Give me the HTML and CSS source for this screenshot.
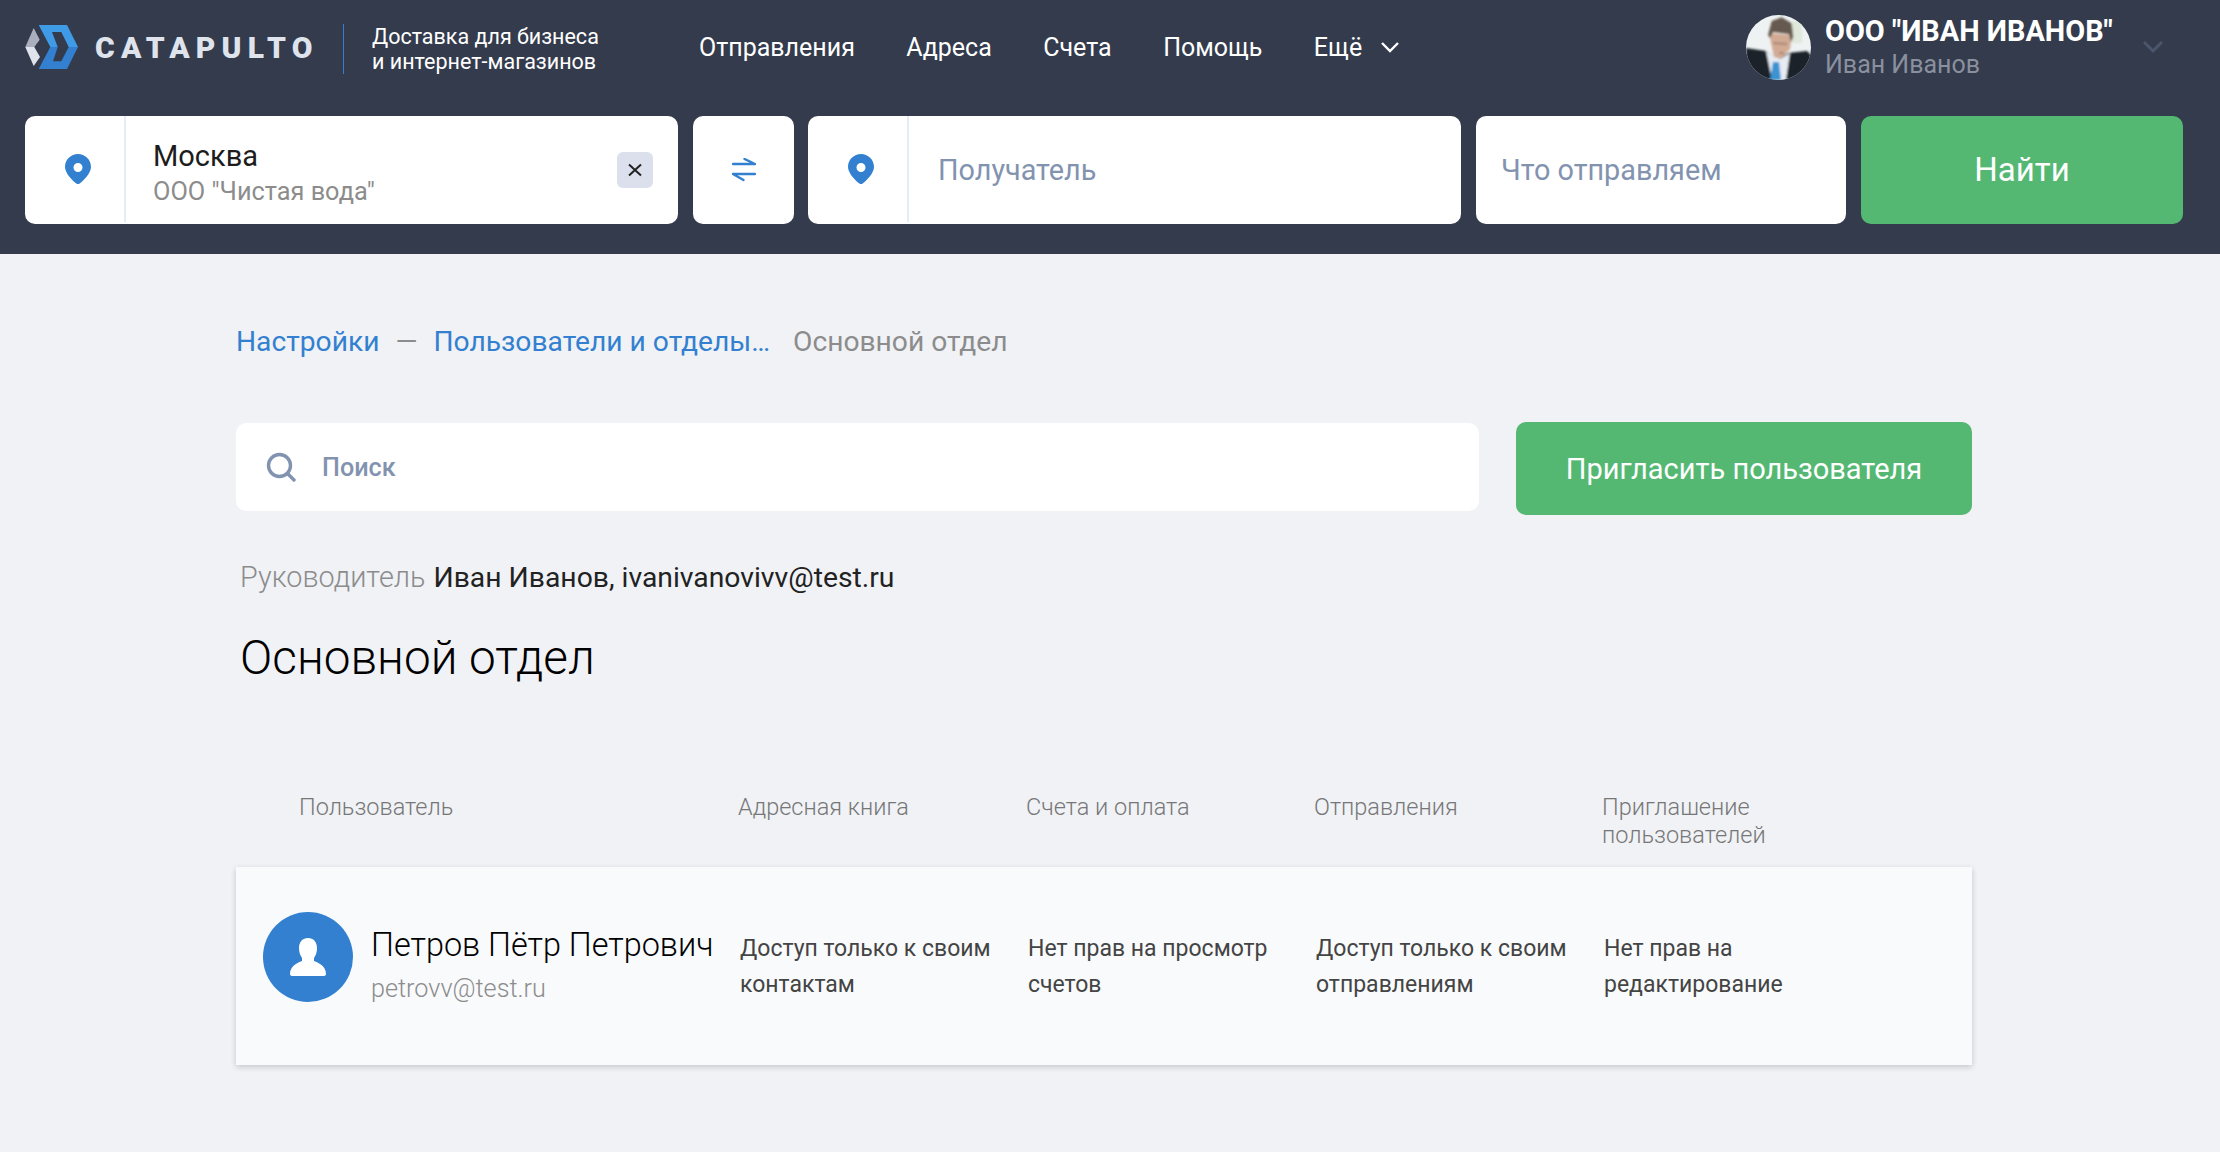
FILE: index.html
```html
<!DOCTYPE html>
<html lang="ru">
<head>
    <meta charset="UTF-8">
    <meta name="viewport" content="width=device-width, initial-scale=1.0">
    <title>Основной отдел</title>
    <link rel="stylesheet" href="styles.css">
</head>
<body>
    <header class="topo">
        <div class="barra">
            <div class="marca">
                <svg class="logo" width="54" height="44" viewBox="0 0 54 44">
                    <path d="M0.300 22 8.700 3 14.700 14.700 9.300 22z" fill="#a9afbc"/>
                    <path d="M0.300 22H9.300L15 32 8.700 41z" fill="#dfe3ec"/>
                    <path d="M13.700 0H42L53 22H43.700L36.300 7H27L32.700 22H25.300z" fill="#3f9be6"/>
                    <path d="M25.300 22H32.700L28 36.300H36.300L43.700 22H53L42 44H13.700z" fill="#3380d0"/>
                </svg>
                <span class="nome-logo">CATAPULTO</span>
                <div class="slogan">Доставка для бизнеса<br>и интернет-магазинов</div>
            </div>
            <nav class="menu">
                <a>Отправления</a>
                <a>Адреса</a>
                <a>Счета</a>
                <a>Помощь</a>
                <a class="mais">Ещё
                    <svg width="20" height="12" viewBox="0 0 20 12"><path d="M2 2l8 8 8-8" fill="none" stroke="#fff" stroke-width="2.400"/></svg>
                </a>
            </nav>
            <div class="conta">
                <svg class="foto" width="65" height="65" viewBox="0 0 65 65">
                    <defs>
                        <clipPath id="roda"><circle cx="32.500" cy="32.500" r="32.500"/></clipPath>
                        <filter id="suave"><feGaussianBlur stdDeviation="0.900"/></filter>
                    </defs>
                    <g clip-path="url(#roda)">
                        <rect width="65" height="65" fill="#eef2f3"/>
                        <g filter="url(#suave)">
                            <rect x="46" y="6" width="10" height="22" fill="#dfe8da"/>
                            <path d="M0 33 20 36 33 44 42 38 61 36 65 40V65H0z" fill="#1b2029"/>
                            <path d="M20 36 26 65H40L44 38 34 44z" fill="#e6ecf2"/>
                            <path d="M27 47H33L35 65H24z" fill="#3b93d2"/>
                            <path d="M23 18 46 20 44 34 35 44 28 42z" fill="#d2ab95"/>
                            <path d="M27 28 41 29M33 38 38 38" stroke="#8a6450" stroke-opacity="0.500" stroke-width="2" fill="none"/>
                            <path d="M22 20 25.700 6 35.700 2.300 45.700 8.300 47.300 22 45 27 43 19 27 17 24 23z" fill="#665a50"/>
                        </g>
                    </g>
                </svg>
                <div class="conta-texto">
                    <div class="empresa">ООО "ИВАН ИВАНОВ"</div>
                    <div class="pessoa">Иван Иванов</div>
                </div>
                <svg class="seta" width="22" height="14" viewBox="0 0 22 14"><path d="M2 2l9 9 9-9" fill="none" stroke="#4b556b" stroke-width="3"/></svg>
            </div>
        </div>
        <div class="busca-topo">
            <div class="campo campo-local">
                <div class="pino">
                    <svg width="26" height="30" viewBox="0 0 26 30"><path fill-rule="evenodd" d="M13 0c7 0 13 5.500 13 13 0 6-7 13-11 16.300-1.200 1-2.800 1-4 0C7 26 0 19 0 13 0 5.500 6 0 13 0zm0 9a4.500 4.500 0 1 0 0 9 4.500 4.500 0 0 0 0-9z" fill="#3380d0"/></svg>
                </div>
                <div class="local-texto">
                    <div class="cidade">Москва</div>
                    <div class="remetente">ООО "Чистая вода"</div>
                </div>
                <button class="limpar">
                    <svg width="14" height="14" viewBox="0 0 14 14"><path d="M1 1.500l12 11M13 1.500 1 12.500" stroke="#222" stroke-width="2" fill="none"/></svg>
                </button>
            </div>
            <div class="campo troca">
                <svg width="24" height="24" viewBox="0 0 24 24"><path d="M1 6h22M12.500 1 23 6M1 16h22M11.500 22 1 16" fill="none" stroke="#3380d0" stroke-width="2.400" stroke-linecap="round"/></svg>
            </div>
            <div class="campo campo-local">
                <div class="pino">
                    <svg width="26" height="30" viewBox="0 0 26 30"><path fill-rule="evenodd" d="M13 0c7 0 13 5.500 13 13 0 6-7 13-11 16.300-1.200 1-2.800 1-4 0C7 26 0 19 0 13 0 5.500 6 0 13 0zm0 9a4.500 4.500 0 1 0 0 9 4.500 4.500 0 0 0 0-9z" fill="#3380d0"/></svg>
                </div>
                <div class="dica dica-destino">Получатель</div>
            </div>
            <div class="campo campo-carga">
                <div class="dica">Что отправляем</div>
            </div>
            <button class="botao-verde botao-achar">Найти</button>
        </div>
    </header>

    <main class="conteudo">
        <div class="migalhas">
            <a>Настройки</a>
            <span class="traco">—</span>
            <a>Пользователи и отделы…</a>
            <span class="atual">Основной отдел</span>
        </div>

        <div class="linha-busca">
            <div class="caixa-busca">
                <svg width="30" height="30" viewBox="0 0 30 30"><circle cx="13.500" cy="13.500" r="11" fill="none" stroke="#8293b0" stroke-width="3.400"/><path d="M22 22l6 6" stroke="#8293b0" stroke-width="3.400" stroke-linecap="round"/></svg>
                <span>Поиск</span>
            </div>
            <button class="botao-verde botao-convite">Пригласить пользователя</button>
        </div>

        <p class="chefe"><span>Руководитель</span> Иван Иванов, ivanivanovivv@test.ru</p>
        <h1>Основной отдел</h1>

        <div class="grade cabecalho">
            <div class="col-usuario">Пользователь</div>
            <div>Адресная книга</div>
            <div>Счета и оплата</div>
            <div>Отправления</div>
            <div class="col-convite">Приглашение пользователей</div>
        </div>

        <div class="grade cartao">
            <div class="usuario">
                <div class="rosto">
                    <svg width="36" height="38" viewBox="0 0 36 38"><path d="M18 0c5.500 0 9 4 9 10 0 4-1 7-3 10l0 3c5 2 12 5 12 13 0 1-1 2-2 2H2c-1 0-2-1-2-2 0-8 7-11 12-13v-3c-2-3-3-6-3-10C9 4 12.500 0 18 0z" fill="#fff"/></svg>
                </div>
                <div class="usuario-texto">
                    <div class="fio">Петров Пётр Петрович</div>
                    <div class="correio">petrovv@test.ru</div>
                </div>
            </div>
            <div class="direito">Доступ только к своим контактам</div>
            <div class="direito">Нет прав на просмотр счетов</div>
            <div class="direito">Доступ только к своим отправлениям</div>
            <div class="direito direito-ultimo">Нет прав на редактирование</div>
        </div>
    </main>
</body>
</html>
```

FILE: styles.css
```css
*{
    margin: 0;
    padding: 0;
    box-sizing: border-box;
}
body{
    font-family: Roboto, "Liberation Sans", sans-serif;
    background-color: #f0f2f6;
    height: 1152px;
    overflow: hidden;
}
button{
    font-family: inherit;
    border: none;
}
.topo{
    height: 254px;
    background-color: #333b4d;
    padding: 0 37px 0 25px;
}
.barra{
    height: 116px;
    display: flex;
    align-items: center;
    padding-bottom: 22px;
}
.marca{
    display: flex;
    align-items: center;
    width: 674px;
}
.nome-logo{
    margin-left: 16px;
    width: 248px;
    font-size: 30px;
    font-weight: 900;
    letter-spacing: 6.200px;
    color: #dfe3ec;
}
.slogan{
    border-left: 1px solid #3380d0;
    height: 50px;
    margin-top: 4px;
    padding-left: 28px;
    font-size: 21.500px;
    line-height: 25px;
    color: #fff;
    white-space: nowrap;
}
.menu{
    display: flex;
    gap: 51.500px;
    font-size: 25px;
    color: #fff;
    flex: 1;
}
.mais{
    display: flex;
    align-items: center;
    gap: 18px;
}
.conta{
    display: flex;
    align-items: center;
    width: 437px;
}
.foto{
    margin-right: 14px;
}
.conta-texto{
    width: 317px;
}
.empresa{
    font-size: 28.900px;
    font-weight: 700;
    line-height: 34px;
    color: #fff;
    white-space: nowrap;
}
.pessoa{
    font-size: 25px;
    line-height: 33px;
    color: #8a909e;
}
.busca-topo{
    display: flex;
    gap: 15px;
    height: 108px;
}
.campo{
    background-color: #fff;
    border-radius: 10px;
    display: flex;
    align-items: center;
}
.campo-local{
    width: 653px;
}
.pino{
    width: 101px;
    height: 106px;
    align-self: flex-start;
    border-right: 2px solid #e6ecf7;
    display: flex;
    align-items: center;
    padding: 0 0 0 40px;
}
.local-texto{
    flex: 1;
    padding: 6px 0 0 27px;
}
.cidade{
    font-size: 29px;
    line-height: 37px;
    color: #1c1c1c;
}
.remetente{
    font-size: 25.300px;
    line-height: 34px;
    color: #8c8c8c;
}
.limpar{
    width: 36px;
    height: 36px;
    margin-right: 25px;
    background-color: #dbe0ec;
    border-radius: 6px;
    display: flex;
    align-items: center;
    justify-content: center;
}
.troca{
    width: 101px;
    margin-right: -1px;
    justify-content: center;
}
.dica{
    font-size: 28.800px;
    color: #8293b0;
}
.dica-destino{
    padding-left: 29px;
}
.campo-carga{
    width: 370px;
    padding-left: 25px;
}
.botao-verde{
    background-color: #54b873;
    color: #fff;
    border-radius: 10px;
}
.botao-achar{
    width: 322px;
    padding-bottom: 2px;
    font-size: 33px;
}
.conteudo{
    padding: 0 248px 0 236px;
}
.migalhas{
    display: flex;
    align-items: center;
    height: 174px;
    font-size: 28.200px;
    color: #8c8c8c;
}
.migalhas a{
    color: #3380d0;
}
.traco{
    margin: 0 16px;
}
.atual{
    margin-left: 23px;
}
.linha-busca{
    display: flex;
    justify-content: space-between;
    align-items: flex-start;
    margin-top: -6px;
}
.caixa-busca{
    width: 1243px;
    height: 88px;
    margin-top: 1px;
    background-color: #fff;
    border-radius: 10px;
    display: flex;
    align-items: center;
    gap: 26px;
    padding-left: 30px;
    font-size: 25.200px;
    font-weight: 500;
    color: #8293b0;
}
.botao-convite{
    width: 456px;
    height: 93px;
    font-size: 29px;
}
.chefe{
    margin: 44px 0 0 4px;
    font-size: 28.300px;
    line-height: 36px;
    color: #222;
}
.chefe span{
    font-size: 28.800px;
    font-weight: 300;
    color: #8c8c8c;
    margin-right: 1px;
}
h1{
    margin: 33px 0 0 4px;
    font-size: 47.700px;
    font-weight: 300;
    line-height: 58px;
    color: #000;
}
.grade{
    display: grid;
    grid-template-columns: 502px 288px 288px 288px 1fr;
}
.cabecalho{
    margin-top: 106px;
    height: 74px;
    font-size: 23.500px;
    line-height: 28px;
    font-weight: 300;
    color: #777;
}
.cabecalho > div{
    padding-right: 30px;
}
.cabecalho > .col-convite{
    padding-right: 150px;
}
.col-usuario{
    padding-left: 63px;
}
.cartao{
    height: 198px;
    padding-top: 45px;
    background-color: #f9fafc;
    box-shadow: 0 2px 6px rgba(0, 0, 0, 0.18);
}
.usuario{
    display: flex;
    padding-left: 27px;
    gap: 18px;
}
.rosto{
    flex: none;
    width: 90px;
    height: 90px;
    border-radius: 50%;
    background-color: #3380d0;
    display: flex;
    align-items: center;
    justify-content: center;
}
.usuario-texto{
    padding-top: 11px;
}
.fio{
    font-size: 32.400px;
    line-height: 44px;
    color: #000;
    white-space: nowrap;
    font-weight: 300;
}
.correio{
    margin-top: 7px;
    font-size: 25.200px;
    font-weight: 300;
    color: #8c8c8c;
}
.direito{
    padding: 19px 30px 0 2px;
    font-size: 23px;
    line-height: 36px;
    color: #444;
}
.direito-ultimo{
    padding-right: 120px;
}
```
